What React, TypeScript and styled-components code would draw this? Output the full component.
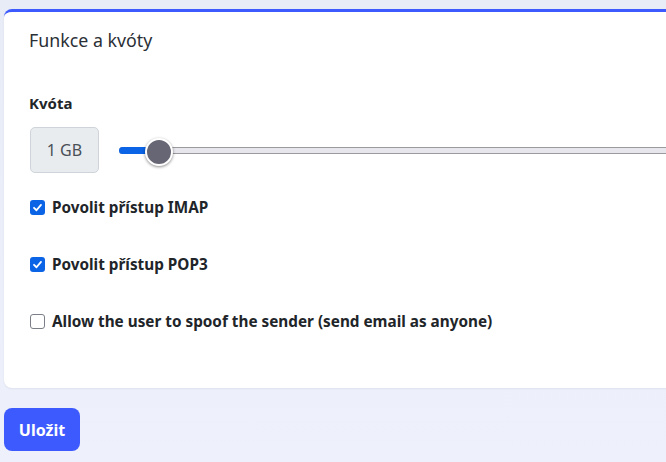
import React from "react";
import styled, { createGlobalStyle } from "styled-components";

const Global = createGlobalStyle`
  html, body { margin: 0; padding: 0; }
  body {
    width: 666px; height: 462px; overflow: hidden;
    background: linear-gradient(180deg, #e8ecf7 0%, #eef1fc 100%);
    font-family: "Noto Sans", Lato, sans-serif;
    color: #212529;
  }
`;

const Page = styled.div`
  display: flex;
  flex-direction: column;
  align-items: flex-start;
  padding: 9px 0 0 4px;
  gap: 20px;
`;

const Card = styled.section`
  width: 720px;
  background: #fff;
  border-top: 3px solid #3d5afe;
  border-radius: 8px;
  box-shadow: 0 1px 2px rgba(40, 50, 90, 0.08);
  padding: 16px 25px 57px;
  box-sizing: border-box;
  display: flex;
  flex-direction: column;
`;

const Title = styled.h2`
  margin: 0;
  font-size: 17.8px;
  font-weight: 400;
  line-height: 24px;
  color: #2b2f36;
`;

const FieldLabel = styled.div`
  margin-top: 41px;
  font-size: 15px;
  font-weight: 700;
  line-height: 20px;
  color: #212529;
`;

const QuotaRow = styled.div`
  display: flex;
  align-items: center;
  gap: 20px;
  margin-top: 14px;
  margin-left: 1px;
`;

const ValueBox = styled.div`
  width: 69px;
  height: 46px;
  box-sizing: border-box;
  border: 1px solid #ced4da;
  border-radius: 5px;
  background: #e9ecef;
  display: flex;
  align-items: center;
  justify-content: center;
  font-size: 16px;
  color: #495057;
`;

const Track = styled.div`
  position: relative;
  flex: 1;
  height: 7px;
  box-sizing: border-box;
  background: #e6e6ec;
  border-top: 1px solid #9a9a9f;
  border-bottom: 1px solid #9a9a9f;
  border-radius: 4px 0 0 4px;
`;

const Fill = styled.div`
  position: absolute;
  left: 0;
  top: -1px;
  bottom: -1px;
  background: #0b63e5;
  border-radius: 4px 0 0 4px;
`;

const Thumb = styled.div`
  position: absolute;
  top: 50%;
  width: 24px;
  height: 24px;
  margin-left: -12px;
  margin-top: -12px;
  border-radius: 50%;
  background: #676675;
  border: 2px solid #fff;
  box-shadow: 0 1px 3px rgba(0, 0, 0, 0.45);
`;

const CheckList = styled.div`
  display: flex;
  flex-direction: column;
  gap: 37px;
  margin-top: 24px;
  margin-left: 1px;
`;

const CheckRow = styled.label`
  display: flex;
  align-items: center;
  gap: 7px;
  font-size: 15.3px;
  font-weight: 700;
  line-height: 20px;
  color: #212529;
`;

const Box = styled.span<{ $checked: boolean }>`
  width: 15px;
  height: 15px;
  box-sizing: border-box;
  border-radius: 3px;
  display: flex;
  align-items: center;
  justify-content: center;
  background: ${(p) => (p.$checked ? "#0b63e5" : "#fff")};
  border: ${(p) => (p.$checked ? "none" : "1.5px solid #7a7f87")};
`;

const SaveButton = styled.button`
  width: 76px;
  height: 43px;
  border: none;
  border-radius: 8px;
  background: #3d5afe;
  color: #fff;
  font-family: inherit;
  font-size: 16px;
  font-weight: 700;
  cursor: pointer;
`;

const Check = ({ checked, children }: { checked: boolean; children: React.ReactNode }) => (
  <CheckRow>
    <Box $checked={checked}>
      {checked && (
        <svg width="11" height="11" viewBox="0 0 12 12">
          <path d="M2.2 6.3 L4.9 9 L9.8 3.2" fill="none" stroke="#fff" strokeWidth="2" strokeLinecap="round" strokeLinejoin="round" />
        </svg>
      )}
    </Box>
    {children}
  </CheckRow>
);

export default function App() {
  const pct = 38 / 580;
  return (
    <>
      <Global />
      <Page>
        <Card>
          <Title>Funkce a kvóty</Title>
          <FieldLabel>Kvóta</FieldLabel>
          <QuotaRow>
            <ValueBox>1 GB</ValueBox>
            <Track>
              <Fill style={{ width: `${pct * 100}%` }} />
              <Thumb style={{ left: `${pct * 100}%` }} />
            </Track>
          </QuotaRow>
          <CheckList>
            <Check checked>Povolit přístup IMAP</Check>
            <Check checked>Povolit přístup POP3</Check>
            <Check checked={false}>Allow the user to spoof the sender (send email as anyone)</Check>
          </CheckList>
        </Card>
        <SaveButton>Uložit</SaveButton>
      </Page>
    </>
  );
}
